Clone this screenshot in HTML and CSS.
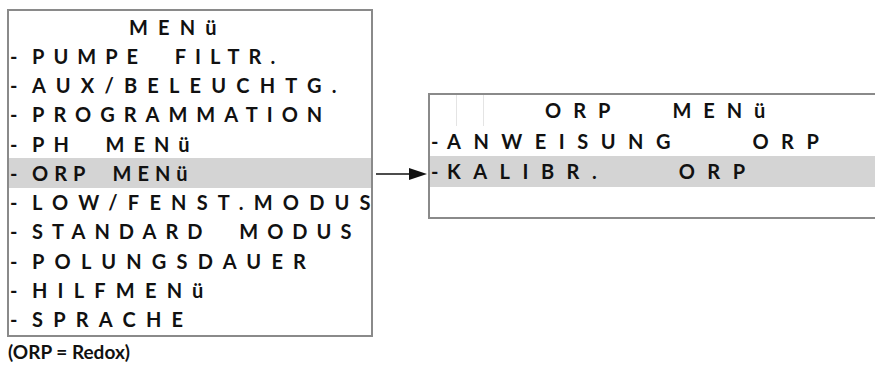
FILE: index.html
```html
<!DOCTYPE html>
<html lang="de">

<head>
  <meta charset="UTF-8">
  <meta name="viewport" content="width=device-width, initial-scale=1.0">
  <title>ORP Menü</title>
  <link rel="stylesheet" href="styles.css">
</head>

<body>
  <div class="diagram">

    <div class="left">
      <div class="screen main">
        <div class="row title wide">MENü</div>
        <div class="row"><span class="dash">-</span>PUMPE  FILTR.</div>
        <div class="row wide"><span class="dash">-</span>AUX/BELEUCHTG.</div>
        <div class="row"><span class="dash">-</span>PROGRAMMATION</div>
        <div class="row"><span class="dash">-</span>PH  MENü</div>
        <div class="row tight active"><span class="dash">-</span>ORP  MENü</div>
        <div class="row wide"><span class="dash">-</span>LOW/FENST.MODUS</div>
        <div class="row"><span class="dash">-</span>STANDARD  MODUS</div>
        <div class="row wide"><span class="dash">-</span>POLUNGSDAUER</div>
        <div class="row wide"><span class="dash">-</span>HILFMENü</div>
        <div class="row wide"><span class="dash">-</span>SPRACHE</div>
      </div>
      <p class="note">(ORP = Redox)</p>
    </div>

    <svg class="arrow" width="55" height="16" viewBox="0 0 55 16">
      <line x1="3" y1="8" x2="40" y2="8" stroke="#111" stroke-width="1.4" />
      <polygon points="36,2 54,8 36,14" fill="#111" />
    </svg>

    <div class="screen sub">
      <div class="row title">
        <span class="cell"></span>
        <span class="cell"></span>
        <span class="caption">ORP   MENü</span>
      </div>
      <div class="row"><span class="dash">-</span>ANWEISUNG    ORP</div>
      <div class="row active"><span class="dash">-</span>KALIBR.    ORP</div>
      <div class="row"></div>
    </div>

  </div>
</body>

</html>
```

FILE: styles.css
```css
* {
  padding: 0;
  margin: 0;
  box-sizing: border-box;
}

body {
  font-family: Lato, "Liberation Sans", sans-serif;
  background-color: white;
  color: #111;
  overflow: hidden;
}

.diagram {
  display: flex;
  align-items: flex-start;
  padding: 9px 0 0 7px;
}

.left,
.arrow,
.sub {
  flex-shrink: 0;
}

.screen {
  border: 2px solid #8a8a8a;
  display: flex;
  flex-direction: column;
}

.main {
  width: 366px;
  height: 328px;
  padding: 1px 0;
}

.sub {
  width: 470px;
  height: 126px;
  margin-top: 84px;
}

.row {
  flex: 1;
  display: flex;
  align-items: center;
  padding-left: 1px;
  font-weight: bold;
  font-size: 20px;
  letter-spacing: 9px;
  white-space: pre;
}

.row.wide {
  letter-spacing: 10.2px;
}

.row.tight {
  letter-spacing: 6px;
}

.dash {
  flex-shrink: 0;
  width: 22px;
  letter-spacing: 0;
}

.main .title {
  padding-left: 120px;
}

.sub .row {
  letter-spacing: 12.5px;
}

.sub .dash {
  width: 16px;
}

.sub .title {
  padding-left: 0;
  align-items: stretch;
}

.cell {
  width: 27px;
  border-right: 1px solid #e4e4e4;
}

.caption {
  display: flex;
  align-items: center;
  padding-left: 61px;
  letter-spacing: 12px;
}

.active {
  background-color: #d4d4d4;
}

.arrow {
  margin-top: 157px;
}

.note {
  font-weight: bold;
  font-size: 19px;
  margin-top: 3px;
  margin-left: 1px;
}
```
